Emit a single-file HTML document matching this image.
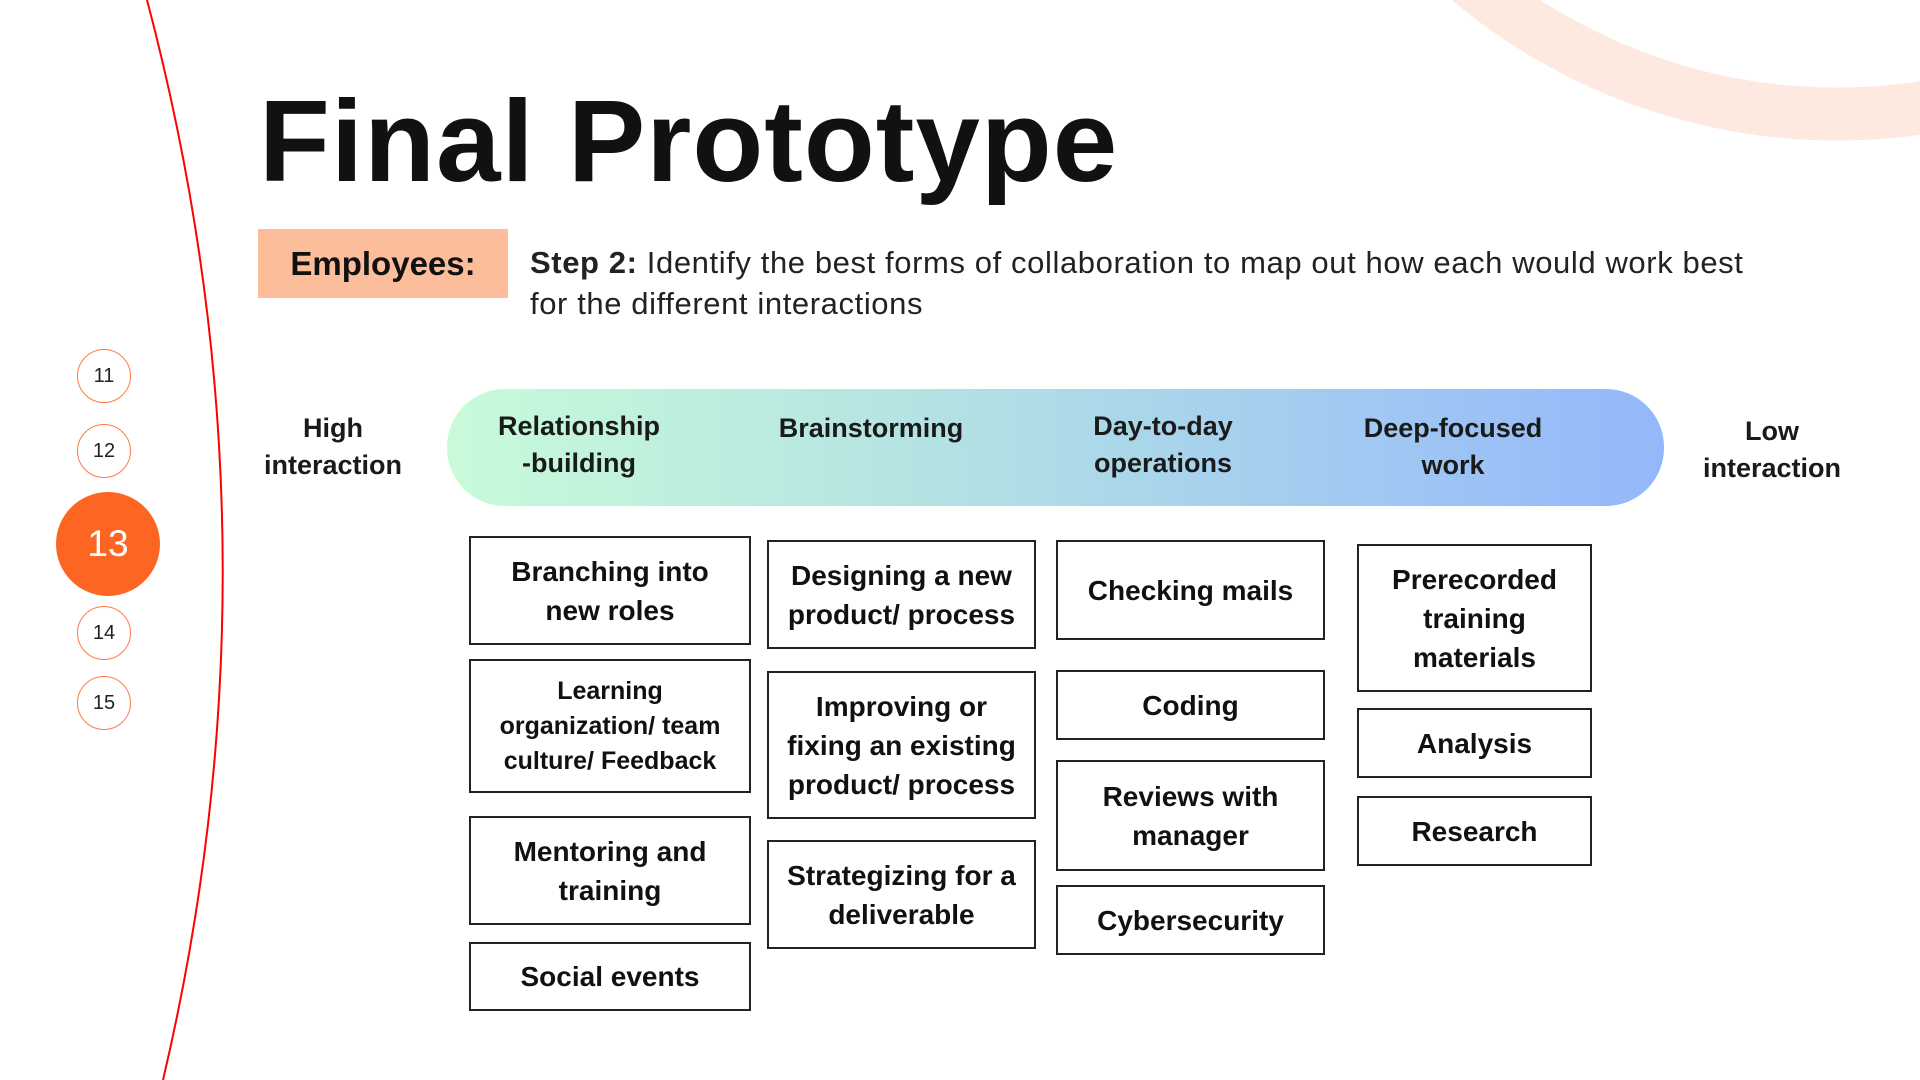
<!DOCTYPE html>
<html><head><meta charset="utf-8"><style>
*{margin:0;padding:0;box-sizing:border-box}
body{width:1920px;height:1080px;overflow:hidden;background:#fff;position:relative;font-family:"Liberation Sans",sans-serif;color:#111}
.a{position:absolute}
.title{left:259px;top:74px;font-size:116px;font-weight:bold;letter-spacing:1px;color:#111;white-space:nowrap}
.emp{left:258px;top:229px;width:250px;height:69px;background:#fbbd9a;font-weight:bold;font-size:33px;display:flex;align-items:center;justify-content:center}
.step{left:530px;top:242px;width:1250px;font-size:31px;line-height:41px;color:#222;letter-spacing:.6px}
.bar{left:447px;top:389px;width:1217px;height:117px;border-radius:58px;background:linear-gradient(90deg,#c8fbd9,#b3e2e3 40%,#a6d0ee 65%,#94b7fb)}
.h{font-weight:bold;font-size:27px;line-height:37px;text-align:center;transform:translateX(-50%);white-space:nowrap;color:#1a1a1a}
.box{position:absolute;border:2px solid #222;display:flex;align-items:center;justify-content:center;text-align:center;font-weight:bold;font-size:28px;line-height:39px;color:#111}
.c1{left:469px;width:282px}.c2{left:767px;width:269px}.c3{left:1056px;width:269px}.c4{left:1357px;width:235px}
.n{position:absolute;border:1.5px solid #fd7a45;border-radius:50%;width:54px;height:54px;display:flex;align-items:center;justify-content:center;font-size:20px;color:#222;background:#fff}
</style></head><body>
<svg class="a" style="left:0;top:0" width="1920" height="1080">
<circle cx="1837" cy="-458" r="572" fill="none" stroke="#fde9e0" stroke-width="53"/>
<path d="M147 0 Q290 540 163 1080" fill="none" stroke="#f00" stroke-width="2"/>
</svg>
<div class="a title">Final Prototype</div>
<div class="a emp">Employees:</div>
<div class="a step"><b>Step 2:</b> Identify the best forms of collaboration to map out how each would work best for the different interactions</div>
<div class="a bar"></div>
<div class="a h" style="left:333px;top:410px">High<br>interaction</div>
<div class="a h" style="left:579px;top:408px">Relationship<br>-building</div>
<div class="a h" style="left:871px;top:410px">Brainstorming</div>
<div class="a h" style="left:1163px;top:408px">Day-to-day<br>operations</div>
<div class="a h" style="left:1453px;top:410px">Deep-focused<br>work</div>
<div class="a h" style="left:1772px;top:413px">Low<br>interaction</div>

<div class="box c1" style="top:536px;height:109px">Branching into<br>new roles</div>
<div class="box c1" style="top:659px;height:134px;font-size:25px;line-height:35px">Learning<br>organization/ team<br>culture/ Feedback</div>
<div class="box c1" style="top:816px;height:109px">Mentoring and<br>training</div>
<div class="box c1" style="top:942px;height:69px">Social events</div>

<div class="box c2" style="top:540px;height:109px">Designing a new<br>product/ process</div>
<div class="box c2" style="top:671px;height:148px">Improving or<br>fixing an existing<br>product/ process</div>
<div class="box c2" style="top:840px;height:109px">Strategizing for a<br>deliverable</div>

<div class="box c3" style="top:540px;height:100px">Checking mails</div>
<div class="box c3" style="top:670px;height:70px">Coding</div>
<div class="box c3" style="top:760px;height:111px">Reviews with<br>manager</div>
<div class="box c3" style="top:885px;height:70px">Cybersecurity</div>

<div class="box c4" style="top:544px;height:148px">Prerecorded<br>training<br>materials</div>
<div class="box c4" style="top:708px;height:70px">Analysis</div>
<div class="box c4" style="top:796px;height:70px">Research</div>

<div class="n" style="left:77px;top:349px">11</div>
<div class="n" style="left:77px;top:424px">12</div>
<div class="n" style="left:56px;top:492px;width:104px;height:104px;background:#fd6522;border:none;color:#fff;font-size:37px">13</div>
<div class="n" style="left:77px;top:606px">14</div>
<div class="n" style="left:77px;top:676px">15</div>
</body></html>
